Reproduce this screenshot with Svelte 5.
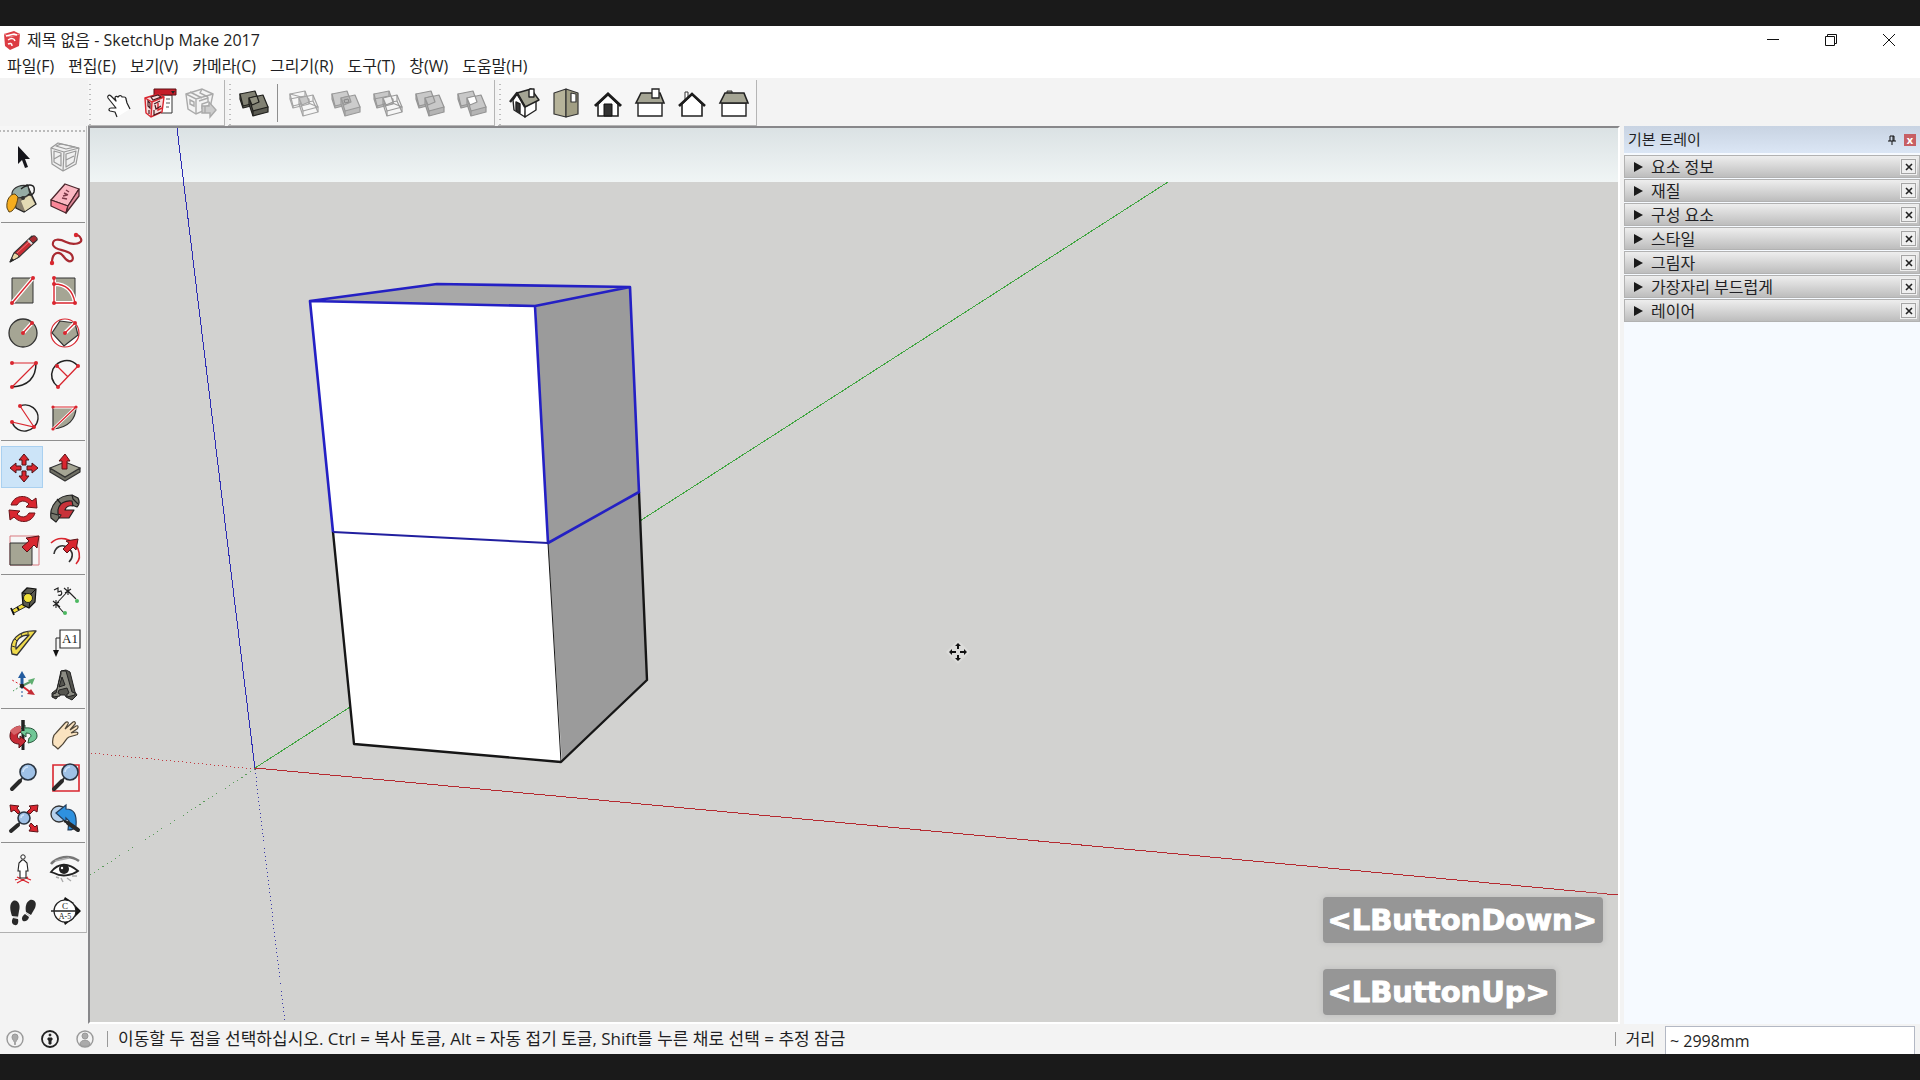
<script lang="ts">
  const RED = '#d9262f';
  const CLAY = '#a5a594';

  // Two overlapping slabs shared by the solid tools
  function slabs(back: string, front: string, middle: string, line: string, side: string) {
    const wire = front === 'none' || back === 'none';
    return `<g stroke="${line}" stroke-width="1.2" stroke-linejoin="round">
      <path fill="${back === 'none' ? 'none' : side}" d="M7 12v5l3 9 16-4v-5z"/>
      <path fill="${back}" d="M7 12l15-3 4 11-16 4z"/>
      ${wire ? '<path fill="none" d="M7 17l15-3 4 7M22 9v5M10 24v2"/>' : ''}
      <path fill="${front === 'none' ? 'none' : side}" d="M16 17v5l4 12 15-4v-5z"/>
      <path fill="${front}" d="M16 16l14-3 5 12-15 4z"/>
      ${front === 'none' ? '<path fill="none" d="M20 29v5M16 22l14-3 5 11M30 13v6"/>' : '<path fill="none" d="M20 29v5"/>'}
      <path fill="${middle}" d="M16 16l8-2 2 6-7 3z"/>
    </g>`;
  }

  function dots(points: number[][], r = 2) {
    return points.map(([x, y]) => `<circle cx="${x}" cy="${y}" r="${r}" fill="${RED}"/>`).join('');
  }

  function lens(x: number, y: number, r: number, hx: number, hy: number) {
    const mx = Math.round((x + hx) / 2);
    const my = Math.round((y + hy) / 2);
    return `<path d="M${x - r + 2} ${y + r - 2}L${mx} ${my}" stroke="#333" stroke-width="2"/>
      <path d="M${mx} ${my}L${hx} ${hy}" stroke="#292929" stroke-width="4" stroke-linecap="round"/>
      <circle cx="${x}" cy="${y}" r="${r}" fill="#9fc1e6" stroke="#29333f" stroke-width="1.6"/>
      <path d="M${x - r + 3} ${y}a${r - 3} ${r - 3} 0 0 1 ${r - 3}-${r - 3}" fill="none" stroke="#d3e5f8" stroke-width="1.5"/>`;
  }

  const icons: Record<string, string> = {
    hand: `<path d="M20 35l-2-5-5-1c-2-1-1-3 1-3l5 0-8-10c-1-2 1-4 3-2l5 5-1-3c0-2 2-2 3-1l1-1c1-1 3 0 3 1l2 0c1 0 2 1 2 2l1 4 3 6" fill="#fff" stroke="#222" stroke-width="1.2" stroke-linejoin="round"/>`,
    warehouse: `<path d="M18 13h15v18H22z" fill="#fff" stroke="#333"/><path d="M27 17h4M27 21h4M27 25h3" stroke="#555"/>
      <path d="M15 7h22v6H15z" fill="#c61d29" stroke="#5c1317"/><path d="M32 9h4l-2 3z" fill="#222"/>
      <path d="M6 16l13-4 6 3-2 15-11 5-5-4z" fill="#f7dcdc" stroke="${RED}" stroke-width="1.4"/>
      <path d="M6 16l7 4 12-5M13 20l-1 15M19 21v7l4-2" fill="none" stroke="${RED}" stroke-width="1.4"/>
      <path d="M9 19l2 2v5l-2-2zM15 22l6-3M16 23l1 4 5-3M10 28v4M15 28v5l7-3M12 15l7-2 3 2-8 3z" fill="none" stroke="#4c1b20" stroke-width="1.2"/>`,
    share: `<g fill="#f4f4f4" stroke="#aaa" stroke-width="1.4"><path d="M5 12l16-5 11 5-3 14-14 6-8-5z"/>
      <path d="M5 12l10 5 17-5M15 17v15M9 10l12 6M9 18l4 2v4l-4-2zM18 19l9-3v4l-6 2v4l8-3M21 7l-2 4 8 4" fill="none"/>
      <path d="M21 24h7v-4l7 8-6 7v-4h-8z" fill="#ccc"/><path d="M24 24v7" /></g>`,
    shell: slabs('#818173', '#818173', '#919181', '#20201d', '#5b5b52'),
    intersect: slabs('none', 'none', '#c8c8c8', '#a4a4a4', '#bbb'),
    union: slabs('#ccc', '#ccc', '#b5b5b5', '#999', '#bbb') + '<path d="M19 18l4-1 1 3-4 1z" fill="none" stroke="#888"/>',
    subtract: slabs('#c8c8c8', 'none', '#eee', '#999', '#bbb'),
    trim: slabs('#c8c8c8', '#c8c8c8', '#c2c2c2', '#949494', '#b4b4b4'),
    split: slabs('#c8c8c8', '#c8c8c8', '#fff', '#949494', '#b4b4b4'),

    iso: `<g stroke="#222" stroke-width="1.4" stroke-linejoin="round"><path d="M10 18l4-6 9 13-1 10-11-7z" fill="#fff"/><path d="M22 25l11-7v10l-11 7z" fill="#fff"/>
      <path d="M14 11l14-4 8 11-14 7z" fill="${CLAY}"/><path d="M7 20l7-9 8 14" fill="none" stroke-width="2.4"/><path d="M13 20l4 2v9l-4-3z" fill="#333"/><path d="M26 8v7h5V7h-4z" fill="#fff"/></g>`,
    top: `<g stroke="#333" stroke-width="1.2" stroke-linejoin="round"><path d="M9 11l12-4v28L9 32z" fill="#b6b39a"/><path d="M21 7l12 4v21l-12 3z" fill="#a19e84"/><path d="M26 11l5 1v8h-5z" fill="#fff"/></g>`,
    front: `<path d="M11 22l10-10 10 10v12H11z" fill="#fff" stroke="#222" stroke-width="1.6"/><path d="M8 24l13-12 13 12" fill="none" stroke="#1c1c1c" stroke-width="3"/><path d="M17 22h8v12h-8z" fill="#333" stroke="#111"/>`,
    right: `<path d="M9 20h24v14H9z" fill="#fff" stroke="#222" stroke-width="1.4"/><path d="M12 11h19l4 10H7z" fill="${CLAY}" stroke="#222" stroke-width="1.6"/><path d="M23 7h7v9h-7z" fill="#fff" stroke="#222" stroke-width="1.3"/>`,
    back: `<path d="M14 19v-9h3v6" fill="#fff" stroke="#333"/><path d="M11 22l10-10 10 10v12H11z" fill="#fff" stroke="#222" stroke-width="1.6"/><path d="M8 24l13-12 13 12" fill="none" stroke="#1c1c1c" stroke-width="2.6"/>`,
    left: `<path d="M14 9h5v3h-5z" fill="${CLAY}" stroke="#333"/><path d="M9 21h24v13H9z" fill="#fff" stroke="#222" stroke-width="1.4"/><path d="M12 11h19l4 10H7z" fill="${CLAY}" stroke="#222" stroke-width="1.6"/>`,

    select: `<path d="M17 10v18l4-4 3 8 3-1-3-8h5z" fill="#16161c"/>`,
    component: `<g fill="none" stroke="#999" stroke-width="1.2" stroke-linejoin="round"><path d="M7 12l7-5 21 5-3 16-13 7-11-7z" fill="#f0f0f0"/>
      <path d="M7 12l13 4 15-4M20 16l-1 19M10 15l7 2v13l-7-4zM22 18l10-3-2 11-8 5zM12 10l10 3 9-2-14-3zM10 23l7-4M22 24l8-4"/></g>`,
    paint: `<path d="M12 14l14-7 9 19-12 8-8-4z" fill="#887f6d" stroke="#222" stroke-width="1.3"/><path d="M20 23l9-6 5 9-10 7z" fill="#e3dab4"/><path d="M11 15c1-6 10-9 16-7l2 8c-5 4-13 5-18 2z" fill="#96aca5" stroke="#333" stroke-width="1.2"/>
      <path d="M20 11c8-6 15-5 13 3-1 3-4 4-6 2" fill="none" stroke="#222" stroke-width="1.5"/><circle cx="22" cy="20" r="2" fill="#333"/><path d="M6 30c-1-8 3-14 8-14l3 3c-1 9-5 15-9 15z" fill="#f6ad1e" stroke="#594114"/>`,
    eraser: `<g stroke="#4b262c" stroke-width="1.3" stroke-linejoin="round"><path d="M21 6l14 5-11 17-17-6z" fill="#fbb8c2"/><path d="M7 22l17 6-2 7-15-7z" fill="#fa8798"/><path d="M24 28l11-17v7L22 35z" fill="#e08a9a"/></g><path d="M18 20l5 1M19 18l4-1M20 15l4 2M22 12l3 2" fill="none" stroke="#7c3a48" stroke-width="1.4"/>`,
    pencil: `<path d="M9 34l4-9L31 8l5 4-18 17z" fill="#c92c33" stroke="#333" stroke-width="1.1" stroke-linejoin="round"/><path d="M9 34l4-9c2 0 5 2 5 4z" fill="#ead5a5" stroke="#333"/><path d="M9 34l2-4 2 2z" fill="#222"/><path d="M16 25L30 12" stroke="#f2767a"/><path d="M28 11l4-3c2-1 5 2 4 4l-4 3z" fill="#a82c32" stroke="#333"/><path d="M27 12l4 4" stroke="#ddd" stroke-width="2"/>`,
    freehand: `<path d="M8 35C8 24 15 22 20 29c6 8 12 3 7-3-5-5-16-3-18-9-1-7 7-6 13-3 8 4 17 1 15-3-1-3-3-4-5-4" fill="none" stroke="#a92a31" stroke-width="2.2"/>${dots([[8, 35], [32, 7]], 2.2)}`,
    rect: `<path d="M11 8h21v25H11z" fill="${CLAY}" stroke="#333"/><path d="M11 33L32 8" stroke="#fff" stroke-width="4"/><path d="M11 33L32 8" stroke="${RED}" stroke-width="1.4"/>${dots([[11, 33], [32, 8]])}`,
    rotrect: `<path d="M10 8h21v25H10z" fill="${CLAY}" stroke="#333"/><path d="M10 8v25h21M10 14c12 0 19 7 21 19" fill="none" stroke="#fff" stroke-width="4"/><path d="M10 8v25h21M10 14c12 0 19 7 21 19" fill="none" stroke="${RED}" stroke-width="1.4"/>${dots([[10, 8], [10, 14], [10, 33], [31, 33]])}`,
    circle: `<circle cx="22" cy="21" r="14" fill="${CLAY}" stroke="#333" stroke-width="1.3"/><path d="M22 21l9-10" stroke="#fff" stroke-width="4"/><path d="M22 21l9-10" stroke="${RED}" stroke-width="1.3"/>${dots([[22, 21], [31, 11]])}`,
    polygon: `<circle cx="21" cy="21" r="14" fill="#fff" stroke="${RED}" stroke-width="1.2"/><path d="M16 9l15 2 3 12-14 11-12-13z" fill="${CLAY}" stroke="#333" stroke-width="1.2"/><path d="M21 21l10-10" stroke="#fff" stroke-width="4"/><path d="M21 21l10-10" stroke="${RED}" stroke-width="1.3"/>${dots([[21, 21], [31, 11]])}`,
    arc: `<path d="M35 9c0 15-8 23-24 24" fill="none" stroke="#222" stroke-width="1.5"/><path d="M11 9h24L11 33" fill="none" stroke="${RED}" stroke-width="1.2"/>${dots([[11, 9], [35, 9], [11, 33]])}`,
    arc2: `<path d="M34 12C26 3 14 6 9 15c-3 7-1 13 5 18" fill="none" stroke="#222" stroke-width="1.5"/><path d="M14 33l20-21M13 12l11 11" stroke="${RED}" stroke-width="1.3"/>${dots([[13, 12], [34, 12], [14, 33]])}`,
    arc3: `<path d="M19 10c10-4 19 4 18 13-2 14-21 17-26 3" fill="none" stroke="#222" stroke-width="1.4"/><path d="M19 10l14 21-22-5" fill="none" stroke="${RED}" stroke-width="1.2"/>${dots([[19, 10], [11, 26], [33, 31]])}`,
    pie: `<path d="M9 11h23c0 12-8 21-23 22z" fill="${CLAY}" stroke="#333" stroke-width="1.2"/><path d="M9 11h23L9 33" fill="none" stroke="#fff" stroke-width="3"/><path d="M9 11h23L9 33" fill="none" stroke="${RED}" stroke-width="1.2"/>${dots([[9, 11], [32, 11], [9, 33]], 1.6)}`,

    move: [0, 90, 180, 270].map((a) => `<path transform="rotate(${a} 23 22)" d="M23 8l5 6h-3v5h-4v-5h-3z" fill="${RED}" stroke="#4d1216" stroke-width="1"/>`).join(''),
    push: `<g stroke="#333" stroke-width="1.2" stroke-linejoin="round"><path d="M6 22l15 9 15-9v4l-15 9-15-9z" fill="#6f6f64"/><path d="M6 22l15-6 15 6-15 9z" fill="${CLAY}"/></g><path d="M21 8l5 7h-3v8h-5v-8h-3z" fill="${RED}" stroke="#5c1317"/>`,
    rotate: `<g fill="${RED}" stroke="#6a1418" stroke-width="1"><path d="M10 17C13 7 25 6 31 13l4-3 1 10-11-1 3-3c-4-4-9-4-12 1z"/><path d="M34 25C31 35 19 36 13 29l-4 3L8 22l11 1-3 3c4 4 9 4 12-1z"/></g>`,
    follow: `<g stroke="#222" stroke-width="1.2" stroke-linejoin="round"><path d="M7 30C5 17 15 7 28 7l6 3c2 4 1 7-1 9l-5-2c-9-1-14 4-13 13l-3 4z" fill="#77776c"/><path d="M28 7l1 4 5 5M7 25l7 2M13 11l5 6" fill="none"/><path d="M14 22c1-7 8-10 14-9l1 5c-4-1-7 1-8 4l9 0-5 8-10 0 2-3-3-1z" fill="#c8323a"/></g>`,
    scale: `<path d="M9 6h29v29H9z" fill="none" stroke="#d97b80"/><path d="M9 13h22v22H9z" fill="${CLAY}" stroke="#333"/><path d="M38 6l-2 12-3-3-7 7-5-5 7-6-3-3z" fill="${RED}" stroke="#5c1317"/>`,
    offset: `<path d="M7 13C15 5 28 8 34 19c2 5 2 11-2 15" fill="none" stroke="${RED}" stroke-width="1.6"/><path d="M10 24c1-7 8-11 14-6 6 4 5 10 1 14" fill="none" stroke="#333" stroke-width="1.6"/><path d="M34 9l-2 11-3-3-6 6-4-4 6-6-3-2z" fill="${RED}" stroke="#5c1317"/>`,
    tape: `<path d="M11 30l12-7 3 3-13 7z" fill="#f1dc3a" stroke="#333"/><path d="M10 28l3 7M16 27l2 3" stroke="#111" stroke-width="1.8"/><path d="M21 13l5-5 9 1-1 13-6 6-6-3z" fill="#5a5a50" stroke="#111" stroke-width="1.2"/><path d="M21 13l9 1 5-5M30 14l-2 14" fill="none" stroke="#111"/><circle cx="27" cy="18" r="4.5" fill="#f2e23a" stroke="#222"/>`,
    dimension: `<path d="M12 24l12-13M12 24l8 9M24 11l8 8M9 21l7 6M20 8l7 6M12 20v8M24 7v8M9 26l6-4M21 13l6-4" stroke="#222" stroke-width="1.1"/><path d="M10 10l4-2 0 4 3-1c2 3 0 5-3 4" fill="none" stroke="#222" stroke-width="1.2"/><circle cx="21" cy="33" r="2" fill="#4cb860"/><circle cx="33" cy="21" r="2" fill="#4cb860"/>`,
    protractor: `<path fill-rule="evenodd" d="M11 32C7 18 18 8 35 9L16 33zM15 27l13-14c-9 0-14 5-13 14z" fill="#efda4c" stroke="#333" stroke-width="1.3" stroke-linejoin="round"/><path d="M11 24l3 1M14 17l2 2M20 12l1 2M27 10v2" stroke="#333"/>`,
    text: `<path d="M16 16h-4v14" fill="none" stroke="#222"/><path d="M9 28h6l-3 7z" fill="#111"/><path d="M16 8h20v18H16z" fill="#fff" stroke="#333" stroke-width="1.2"/><text x="26" y="21" text-anchor="middle" font-family="Liberation Serif, serif" font-size="13" fill="#222">A1</text>`,
    axes: `<path d="M21 22V12" stroke="#225b9f" stroke-width="3"/><path d="M21 7l4 7h-8z" fill="#225b9f"/><path d="M21 22l8-4" stroke="#5a9b69" stroke-width="2"/><path d="M34 14l-3 7-4-5z" fill="#5fae70"/><path d="M21 22l8 6" stroke="${RED}" stroke-width="2"/><path d="M34 31l-8-1 4-5z" fill="#c32c35"/><path d="M21 23v11" stroke="#225b9f" stroke-dasharray="2 2"/><path d="M20 22l-8 5" stroke="#4a9b59" stroke-dasharray="2 2"/><path d="M20 21l-9-5" stroke="${RED}" stroke-dasharray="2 2"/><circle cx="21" cy="22" r="2.2" fill="#222"/>`,
    text3d: `<g stroke="#222" stroke-linejoin="round"><path d="M17 7l5-1 4 2 5 20 2 3-5 5-6-3-1-2-6 0-3 4-4-2v-4l5-4z" fill="#55554f"/><path fill-rule="evenodd" d="M17 7h5l6 21 3 1v2l-8 2v-3l2-1-2-5-8 2-1 3 2 1v2l-7 1v-3l3-1 5-19zM18 13l-3 10 6-2z" fill="#8c8c83"/></g>`,

    orbit: `<path d="M22 6v30" stroke="#222" stroke-width="3"/><path d="M24 14c8-1 12 3 12 8 0 3-3 6-9 7l1-5c3-1 3-5-3-5v4l-7-6 6-6z" fill="#70c796" stroke="#28543a"/><path d="M19 12c-6 1-10 4-10 10 0 5 4 8 9 8v4l7-7-6-5v3c-3 0-4-5 1-7z" fill="#c52b36" stroke="#571216"/><path d="M9 17l4 4 7-4v-5c-5 0-9 2-11 5z" fill="#d56368"/><path d="M22 6v11" stroke="#222" stroke-width="3"/>`,
    pan: `<path d="M9 31c-1-4 0-10 3-12l9-10c2-2 4-1 3 1l-3 5 8-7c2-1 3 1 2 2l-5 6 6-4c2-1 3 1 1 3l-6 4 5-1c3 0 2 3 0 3l-7 2c-3 1-4 6-8 9l-3 3c-2-2-3-3-5-4z" fill="#fae3c0" stroke="#4f4638" stroke-width="1.2"/>`,
    zoom: lens(27, 16, 8, 11, 33),
    zoomwin: `<path d="M9 9h26v26H9z" fill="none" stroke="${RED}" stroke-width="1.6"/>${lens(26, 16, 8, 10, 33)}`,
    extents: `${lens(23, 20, 6, 10, 33)}<g fill="${RED}" stroke="#5c1317"><path d="M9 7l9 1-2 2 3 4-2 2-4-4-3 2z"/><path d="M37 7l-9 1 2 2-4 4 3 2 4-4 3 2z"/><path d="M37 34l-9-1 2-3-2-2 2-3 4 4 2-2z"/></g>`,
    previous: `<circle cx="15" cy="16" r="8" fill="#b6d1ed" stroke="#333" stroke-width="1.3"/><path d="M12 15l10-8v4c8 0 11 5 10 17-1 3-4 4-8 4l1-9-3-3v4z" fill="#2e91df" stroke="#223d5b" stroke-width="1.2"/><path d="M20 23l4 2" stroke="#222" stroke-width="2"/><path d="M24 25l10 7" stroke="#2a2a2a" stroke-width="4" stroke-linecap="round"/>`,
    camera: `<path d="M16 29l12 6M27 29l-11 6M14 32l8-3 8 3" fill="none" stroke="${RED}" stroke-width="1.3"/><path d="M21 12l-3 3-1 8h2v7h6v-7h2l-1-8-3-3z" fill="#fff" stroke="#222" stroke-width="1.1"/><circle cx="22" cy="9" r="2.2" fill="#fff" stroke="#222"/>`,
    look: `<path d="M7 16c6-7 18-10 28-3" fill="none" stroke="#777" stroke-width="2.6"/><path d="M7 24c7-9 17-10 27-1-7 5-17 6-24 2z" fill="#fff" stroke="#222" stroke-width="1.8"/><circle cx="20" cy="21" r="5" fill="#222"/><circle cx="18" cy="20" r="1.2" fill="#fff"/><path d="M12 29l3 1M17 30l2 4M23 30l4 3M28 28l5 0M11 13l14-3" stroke="#aaa" stroke-width="1.4"/>`,
    walk: `<g fill="#292929"><path d="M12 11c5-2 8 4 6 10l-1 6-6-1c-2-6-3-12 1-15z"/><path d="M12 28l5 1c1 4-1 7-3 6-3 0-4-4-2-7z"/><path d="M29 10c5-1 7 3 5 8l-4 7-5-3c-1-5 0-10 4-12z"/><path d="M24 24l4 3c-1 4-4 5-6 4-2-2-1-5 2-7z"/></g><path d="M12 27h5M25 23l4 3" stroke="#bbb"/>`,
    section: `<path d="M21 7l9 6H18zM21 35l9-7H18zM31 15l6 6-6 6z" fill="#111"/><circle cx="21" cy="21" r="11" fill="#fff" stroke="#222" stroke-width="1.2"/><path d="M7 21h28" stroke="#222" stroke-width="1.5"/><g font-family="Liberation Serif, serif" fill="#222" text-anchor="middle"><text x="21" y="19" font-size="9">C</text><text x="21" y="29" font-size="8">A-5</text></g>`
  };

  const menus = ['파일(F)', '편집(E)', '보기(V)', '카메라(C)', '그리기(R)', '도구(T)', '창(W)', '도움말(H)'];

  const bars = [
    [['hand', 'warehouse', 'share']],
    [['shell'], ['intersect', 'union', 'subtract', 'trim', 'split']],
    [['iso', 'top', 'front', 'right', 'back', 'left']]
  ];

  const toolGroups = [
    ['select', 'component', 'paint', 'eraser'],
    ['pencil', 'freehand', 'rect', 'rotrect', 'circle', 'polygon', 'arc', 'arc2', 'arc3', 'pie'],
    ['move', 'push', 'rotate', 'follow', 'scale', 'offset'],
    ['tape', 'dimension', 'protractor', 'text', 'axes', 'text3d'],
    ['orbit', 'pan', 'zoom', 'zoomwin', 'extents', 'previous'],
    ['camera', 'look', 'walk', 'section']
  ];

  const panels = ['요소 정보', '재질', '구성 요소', '스타일', '그림자', '가장자리 부드럽게', '레이어'];
  const keys = ['<LButtonDown>', '<LButtonUp>'];

  let tool = $state('move');
  let distance = $state('~ 2998mm');
</script>

{#snippet icon(name: string)}
  <svg class="icon" viewBox="0 0 42 42" aria-hidden="true">{@html icons[name]}</svg>
{/snippet}

<div class="screen">
  <div class="window">
    <header class="titlebar">
      <svg class="logo" viewBox="0 0 18 20" aria-hidden="true">
        <path d="M1 4l10-3 6 3-1 12-9 4-5-4z" fill="#dc3c43" />
        <path d="M1 4l6 3 10-3" fill="none" stroke="#f08a8d" />
        <path d="M3 6l8-2 3 1M5 10c3-2 6-2 7 1M5 14c2-1 4-1 4 2" fill="none" stroke="#fff" stroke-width="1.5" />
      </svg>
      <h1>제목 없음 - SketchUp Make 2017</h1>
      <div class="controls">
        <button aria-label="최소화"><svg viewBox="0 0 12 12"><path d="M0 5.5h12" /></svg></button>
        <button aria-label="이전 크기로"><svg viewBox="0 0 12 12"><path d="M.5 2.5h9v9h-9zM2.5 2.5v-2h9v9h-2" /></svg></button>
        <button aria-label="닫기"><svg viewBox="0 0 12 12"><path d="M0 0l12 12M12 0L0 12" /></svg></button>
      </div>
    </header>

    <nav class="menubar">
      {#each menus as menu}
        <button>{menu}</button>
      {/each}
    </nav>

    <!-- Docked toolbars -->
    <div class="toolbars">
      {#each bars as bar}
        <div class="bar">
          {#each bar as part, i}
            {#if i > 0}<span class="divider"></span>{/if}
            {#each part as name}
              <button class="tool" aria-label={name}>{@render icon(name)}</button>
            {/each}
          {/each}
        </div>
      {/each}
    </div>

    <div class="workspace">
      <aside class="palette">
        {#each toolGroups as group}
          <div class="tool-group">
            {#each group as name}
              <button class="tool" class:active={tool === name} aria-label={name} onclick={() => (tool = name)}>
                {@render icon(name)}
              </button>
            {/each}
          </div>
        {/each}
      </aside>

      <main class="viewport">
        <svg class="scene" viewBox="90 128 1528 894" preserveAspectRatio="xMinYMin slice" aria-hidden="true">
          <defs>
            <linearGradient id="sky" x1="0" y1="0" x2="0" y2="1">
              <stop offset="0" stop-color="#dbe2e4" />
              <stop offset="1" stop-color="#f0f5f5" />
            </linearGradient>
          </defs>
          <rect x="90" y="128" width="1528" height="894" fill="#d2d2d0" />
          <rect x="90" y="128" width="1528" height="54" fill="url(#sky)" />

          <g fill="none" shape-rendering="crispEdges">
            <path d="M177 128L255 769" stroke="#2c2cb4" />
            <path d="M255 769L285 1022" stroke="#3a3aa8" stroke-dasharray="1 3" />
            <path d="M255 768L1168 182" stroke="#3fa53f" />
            <path d="M255 769L90 875" stroke="#5a9b5a" stroke-dasharray="1 4" />
            <path d="M255 768L1618 895" stroke="#b52a30" />
            <path d="M255 769L90 753" stroke="#c23c42" stroke-dasharray="1 3" />
          </g>

          <path d="M310 301L437 284 630 287 536 306z" fill="#a8a8a8" />
          <path d="M310 301L536 306 548 543 562 762 354 744 333 532z" fill="#fff" />
          <path d="M536 306L630 287 639 492 647 680 562 762 548 543z" fill="#9b9b9b" />
          <g fill="none" stroke-linejoin="round">
            <path d="M333 532L354 744 561 762 647 680 639 492" stroke="#161616" stroke-width="2.4" />
            <path d="M548 543L561 762" stroke="#161616" />
            <path d="M333 532L310 301 437 284 630 287 639 492 548 543 535 306 630 287M310 301L535 306" stroke="#2420c4" stroke-width="2.6" />
            <path d="M333 532L548 543" stroke="#211f9f" stroke-width="2" />
          </g>

          <!-- Move cursor -->
          <path d="M958 640l12 12-12 12-12-12z" fill="#dcdcda" />
          <g fill="#111">
            <path d="M958 643l3 3h-2v3h-2v-3h-2zM958 661l3-3h-2v-3h-2v3h-2zM949 652l3-3v2h4v2h-4v2zM967 652l-3-3v2h-4v2h4v2z" />
          </g>
        </svg>

        <div class="keys">
          {#each keys as key}
            <kbd>{key}</kbd>
          {/each}
        </div>
      </main>

      <aside class="tray">
        <header class="tray-head">
          <h2>기본 트레이</h2>
          <button class="pin" aria-label="고정">
            <svg viewBox="0 0 8 10"><path d="M2 1v5M5 1v5M6 1v5M2 1h4M0 6h8M4 6v4" /></svg>
          </button>
          <button class="close" aria-label="트레이 닫기">x</button>
        </header>
        {#each panels as panel}
          <section class="panel">
            <button class="toggle"><span class="caret"></span>{panel}</button>
            <button class="dismiss" aria-label="{panel} 닫기">
              <svg viewBox="0 0 8 8"><path d="M1 1l6 6M7 1L1 7" /></svg>
            </button>
          </section>
        {/each}
      </aside>
    </div>

    <footer class="status">
      <div class="badges">
        <svg viewBox="0 0 18 18" fill="none" stroke="#999">
          <circle cx="9" cy="9" r="8" stroke-width="1.4" />
          <path d="M9 15c0-4-3-5-3-8a3 3 0 0 1 6 0c0 3-3 4-3 8z" fill="#aaa" />
        </svg>
        <svg viewBox="0 0 18 18" fill="#222" stroke="#222">
          <circle cx="9" cy="9" r="8" fill="none" stroke-width="1.8" />
          <circle cx="9" cy="5" r="1" />
          <path d="M7 8h4v2h-1v4H8v-4H7z" />
        </svg>
        <svg viewBox="0 0 18 18" fill="#aaa" stroke="#999">
          <circle cx="9" cy="9" r="8" fill="none" stroke-width="1.4" />
          <circle cx="9" cy="6" r="3" />
          <path d="M4 14c0-5 10-5 10 0-2 3-8 3-10 0z" />
        </svg>
      </div>
      <p class="hint">이동할 두 점을 선택하십시오. Ctrl = 복사 토글, Alt = 자동 접기 토글, Shift를 누른 채로 선택 = 추정 잠금</p>
      <label for="distance">거리</label>
      <input id="distance" type="text" bind:value={distance} />
    </footer>
  </div>
</div>

<style>
  :global(body) { background: #1a1a1a; }

  .screen {
    box-sizing: border-box;
    height: 100vh;
    padding: 26px 0;
    background: #1a1a1a;
    font-family: "Open Sans", "Noto Sans CJK KR", sans-serif;
    font-size: 16px;
    color: #1f1f24;
  }

  .window { display: flex; flex-direction: column; height: 100%; background: #f3f3f3; overflow: hidden; }

  button { font: inherit; color: inherit; background: none; border: 0; padding: 0; }
  h1, h2, p { margin: 0; font-size: inherit; font-weight: 400; }

  .titlebar { display: flex; align-items: center; height: 28px; background: #fff; flex-shrink: 0; }
  .logo { width: 18px; height: 20px; margin: 0 6px 0 3px; }
  .titlebar h1 { flex: 1; font-size: 15px; line-height: 28px; }
  .controls { display: flex; padding-right: 2px; }
  .controls button { width: 58px; height: 28px; display: grid; place-items: center; }
  .controls svg { width: 12px; height: 12px; fill: none; stroke: #111; }
  .titlebar h1 { font-size: 16px; }

  .menubar { display: flex; gap: 14px; height: 24px; padding: 0 7px; background: #fff; flex-shrink: 0; line-height: 24px; }

  .toolbars { display: flex; height: 48px; padding: 2px 0 0 88px; box-sizing: border-box; flex-shrink: 0; }
  .bar {
    display: flex;
    align-items: center;
    padding: 0 1px 0 9px;
    border-right: 1px solid #b5b5b5;
    background: radial-gradient(circle, #bbb 1px, transparent 1px) 0 2px / 4px 5px repeat-y, #f6f6f6;
    border-bottom: 1px solid #b5b5b5;
    margin-right: 3px;
  }
  .bar + .bar { padding-left: 5px; }
  .divider { width: 1px; height: 38px; margin: 0 5px 0 2px; background: #8f8f8f; }

  .tool { width: 42px; height: 42px; display: block; }
  .icon { display: block; width: 42px; height: 42px; }

  .workspace { flex: 1; display: flex; min-height: 0; }

  .palette {
    align-self: flex-start;
    box-sizing: border-box;
    width: 87px;
    padding: 10px 1px 0;
    margin-right: 1px;
    border-right: 1px solid #c2c2c2;
    border-bottom: 1px solid #b0b0b0;
    background: radial-gradient(circle, #bbb 1px, transparent 1px) 2px 3px / 4px 4px repeat-x, #f6f6f6;
  }
  .tool-group { display: grid; grid-template-columns: 42px 42px; column-gap: 1px; }
  .tool-group + .tool-group { margin-top: 2px; padding-top: 5px; border-top: 1px solid #8f8f8f; }
  .active { background: #cce4f8; box-shadow: inset 0 0 0 1px #a9d0f0; }

  .viewport {
    flex: 1;
    position: relative;
    min-width: 0;
    border: 2px solid #fff;
    border-top-color: #87878a;
    border-left-color: #87878a;
    background: #d2d2d0;
  }
  .scene { display: block; width: 100%; height: 100%; }

  .keys {
    position: absolute;
    right: 15px;
    bottom: 7px;
    display: flex;
    flex-direction: column;
    align-items: flex-start;
    gap: 26px;
  }
  kbd {
    padding: 0 6px 0 4px;
    border-radius: 4px;
    background: #969696;
    box-shadow: 0 0 5px 2px #c4c4c3;
    color: #fff;
    font-family: "DejaVu Sans", sans-serif;
    font-size: 29px;
    font-weight: 700;
    line-height: 46px;
    -webkit-text-stroke: 1px #fff;
  }

  .tray { width: 296px; margin-left: 4px; background: #f6faff; flex-shrink: 0; }
  .tray-head {
    display: flex;
    align-items: center;
    height: 27px;
    margin-bottom: 2px;
    padding: 0 4px;
    background: linear-gradient(#c8d3e2, #dbe6f5);
  }
  .tray-head h2 { flex: 1; font-size: 15px; line-height: 25px; }
  .pin svg { display: block; width: 8px; height: 10px; fill: none; stroke: #111; }
  .close { width: 12px; height: 12px; margin-left: 8px; background: #c75f64; color: #fff; font-size: 11px; font-weight: 700; line-height: 10px; }

  .panel {
    display: flex;
    align-items: center;
    box-sizing: border-box;
    height: 23px;
    margin-bottom: 1px;
    padding-right: 3px;
    border: 1px solid #b2b2b2;
    background: linear-gradient(#eee, #bdbdbd);
  }
  .toggle { flex: 1; display: flex; align-items: center; text-align: left; line-height: 20px; }
  .caret { margin: 0 8px 0 9px; border-left: 9px solid #1a1a1a; border-top: 5px solid transparent; border-bottom: 5px solid transparent; }
  .dismiss { width: 15px; height: 15px; display: grid; place-items: center; background: #efefef; border: 1px solid #a5a5a5; outline: 1px solid #f0f0f0; }
  .dismiss svg { width: 8px; height: 8px; stroke: #222; stroke-width: 1.6; }

  .status { display: flex; align-items: center; height: 30px; flex-shrink: 0; }
  .badges { display: flex; gap: 17px; padding: 0 13px 0 6px; }
  .badges svg { width: 18px; height: 18px; }
  .hint { flex: 1; padding-left: 10px; border-left: 1px solid #999; font-size: 17px; line-height: 16px; white-space: nowrap; }
  .status label { padding: 0 10px; border-left: 1px solid #999; line-height: 14px; }
  .status input {
    box-sizing: border-box;
    width: 250px;
    height: 28px;
    margin: 2px 5px 0 0;
    padding: 0 4px;
    border: 1px solid #b3b8c4;
    border-bottom: 0;
    background: #fff;
    font: inherit;
    color: inherit;
  }
</style>
